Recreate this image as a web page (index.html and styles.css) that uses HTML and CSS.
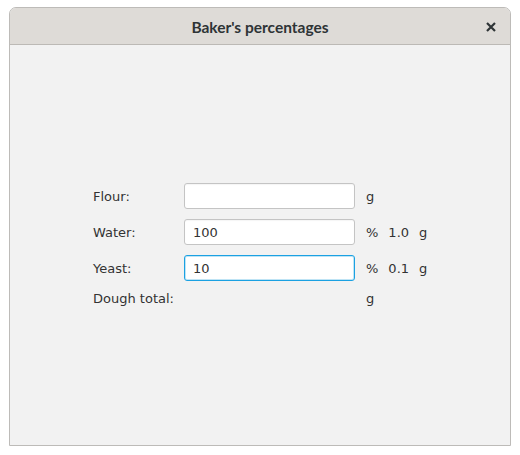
FILE: index.html
```html
<!DOCTYPE html>
<html>
<head>
<meta charset="utf-8">
<link rel="stylesheet" href="styles.css">
</head>
<body>
<div class="window">
  <div class="titlebar">
    <span class="title">Baker's percentages</span>
    <svg class="close" width="10" height="10" viewBox="0 0 10 10"><path d="M1 1 L9 9 M9 1 L1 9" stroke="#2e3436" stroke-width="2.2" stroke-linecap="butt"/></svg>
  </div>
  <div class="content">
    <div class="form">
      <label class="label">Flour:</label>
      <input class="field" type="text" value="">
      <div class="units"><span>g</span></div>

      <label class="label">Water:</label>
      <input class="field" type="text" value="100">
      <div class="units"><span>%</span><span>1.0</span><span>g</span></div>

      <label class="label">Yeast:</label>
      <input class="field focused" type="text" value="10">
      <div class="units"><span>%</span><span>0.1</span><span>g</span></div>

      <label class="label">Dough total:</label>
      <div></div>
      <div class="units"><span>g</span></div>
    </div>
  </div>
</div>
</body>
</html>
```
FILE: styles.css
```css
html, body {
  margin: 0;
  padding: 0;
  background: #ffffff;
}
body {
  padding: 7px 9px 10px 9px;
  font-family: "DejaVu Sans", sans-serif;
}
.window {
  width: 502px;
  height: 439px;
  box-sizing: border-box;
  border: 1px solid #bdbbb8;
  border-radius: 7px 7px 0 0;
  background: #f2f2f2;
  display: flex;
  flex-direction: column;
  overflow: hidden;
}
.titlebar {
  height: 36px;
  flex: none;
  background: #dedbd7;
  border-bottom: 1px solid #bcb9b5;
  display: flex;
  align-items: center;
  justify-content: center;
  position: relative;
}
.title {
  font-family: Lato, "DejaVu Sans", sans-serif;
  font-weight: bold;
  font-size: 15.5px;
  color: #2e3436;
  padding-top: 2px;
}
.close {
  position: absolute;
  right: 14px;
  top: 14px;
}
.content {
  flex: 1;
  padding: 138px 0 0 83px;
}
.form {
  display: grid;
  grid-template-columns: 80px 171px auto;
  column-gap: 11px;
  row-gap: 10px;
  align-items: center;
  font-size: 13px;
  color: #333333;
}
.label {
  white-space: nowrap;
}
.field {
  box-sizing: border-box;
  width: 171px;
  height: 26px;
  margin: 0;
  border: 1px solid #c4c4c4;
  border-radius: 3px;
  background: #ffffff;
  padding: 0 8px;
  font-family: "DejaVu Sans", sans-serif;
  font-size: 13px;
  color: #333333;
  outline: none;
  box-shadow: inset 0 1px 1px rgba(0,0,0,0.04);
}
.field.focused {
  border: 1px solid #1ba1e2;
  box-shadow: 0 0 0 1px #bfe4f5 inset;
}
.units {
  display: flex;
  gap: 10px;
}
```
